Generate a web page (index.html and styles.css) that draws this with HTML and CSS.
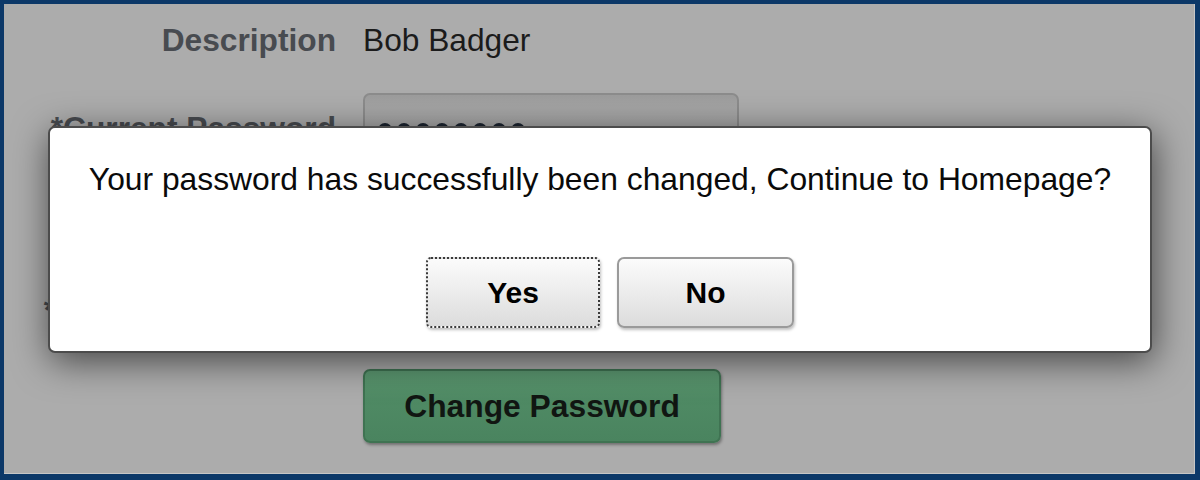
FILE: index.html
```html
<!DOCTYPE html>
<html lang="en">
<head>
<meta charset="utf-8">
<title>Change Password</title>
<link rel="stylesheet" href="styles.css">
</head>
<body>
<div class="frame">
  <div class="page">
    <div class="form">
      <div class="row row-desc">
        <div class="label">Description</div>
        <div class="value">Bob Badger</div>
      </div>
      <div class="row row-field">
        <div class="label">*Current Password</div>
        <div class="input"><span class="dot"></span><span class="dot"></span><span class="dot"></span><span class="dot"></span><span class="dot"></span><span class="dot"></span><span class="dot"></span><span class="dot"></span></div>
      </div>
      <div class="row row-field">
        <div class="label">*New Password</div>
        <div class="input"></div>
      </div>
      <div class="row row-field">
        <div class="label">*Confirm Password</div>
        <div class="input"></div>
      </div>
      <div class="row row-action">
        <div class="label"></div>
        <div class="value"><button class="btn-green">Change Password</button></div>
      </div>
    </div>

    <div class="dialog">
      <p class="message">Your password has successfully been changed, Continue to Homepage?</p>
      <div class="actions">
        <button class="btn btn-focus">Yes</button>
        <button class="btn">No</button>
      </div>
    </div>
  </div>
</div>
</body>
</html>
```

FILE: styles.css
```css
* { box-sizing: border-box; }

html, body {
  margin: 0;
  padding: 0;
}

body {
  font-family: "Liberation Sans", Arial, sans-serif;
  background: #0c3868;
}

.frame {
  width: 1200px;
  height: 480px;
  padding: 4px 5px 6px 4px;
  background: #0c3868;
}

.page {
  position: relative;
  height: 100%;
  background: #acacac;
  border-right: 1px solid #c6c6c6;
  border-bottom: 1px solid #c6c6c6;
  overflow: hidden;
}

.form {
  display: flex;
  flex-direction: column;
  padding-top: 18px;
}

.row {
  display: grid;
  grid-template-columns: 332px 376px;
  column-gap: 27px;
  align-items: center;
  font-size: 31.7px;
}

.row-desc {
  margin-bottom: 34px;
}

.row-field {
  margin-bottom: 21px;
}

.row-field:nth-child(4) {
  margin-bottom: 24px;
}

.label {
  text-align: right;
  font-weight: bold;
  color: #484b50;
  white-space: nowrap;
}

.value {
  color: #1b1b1b;
}

.input {
  height: 70px;
  border: 2px solid #8c8c8c;
  border-radius: 7px;
  background: linear-gradient(#9c9c9c, #a6a6a6 20%, #a8a8a8);
  display: flex;
  align-items: center;
  gap: 5px;
  padding: 4px 0 0 13px;
}

.dot {
  width: 14px;
  height: 14px;
  border-radius: 50%;
  background: #1c2430;
}

.btn-green {
  width: 358px;
  height: 74px;
  font-family: inherit;
  font-size: 31.8px;
  font-weight: bold;
  color: #111612;
  background: linear-gradient(#5c9871, #4f8a64 40%, #4a845f);
  border: 2px solid #3f7352;
  border-radius: 7px;
  box-shadow: 1px 2px 3px rgba(0, 0, 0, 0.35);
  padding: 0;
}

.dialog {
  position: absolute;
  left: 44px;
  top: 122px;
  width: 1104px;
  height: 227px;
  background: #ffffff;
  border: 2px solid #4c4c4c;
  border-radius: 7px;
  box-shadow: 2px 8px 36px rgba(0, 0, 0, 0.6);
  padding-top: 33px;
  text-align: center;
}

.message {
  margin: 0;
  font-size: 31.8px;
  color: #0a0a0a;
}

.actions {
  display: flex;
  justify-content: center;
  gap: 17px;
  margin-top: 59px;
  padding-left: 20px;
}

.btn {
  width: 177px;
  height: 71px;
  font-family: inherit;
  font-size: 30px;
  font-weight: bold;
  color: #000;
  background: linear-gradient(#fbfbfb, #ececec 50%, #dcdcdc);
  border: 2px solid #9a9a9a;
  border-radius: 7px;
  box-shadow: 1px 2px 3px rgba(0, 0, 0, 0.25);
  padding: 0;
}

.btn-focus {
  width: 174px;
  border: 2px dotted #3a3a3a;
  border-radius: 5px;
}
```
